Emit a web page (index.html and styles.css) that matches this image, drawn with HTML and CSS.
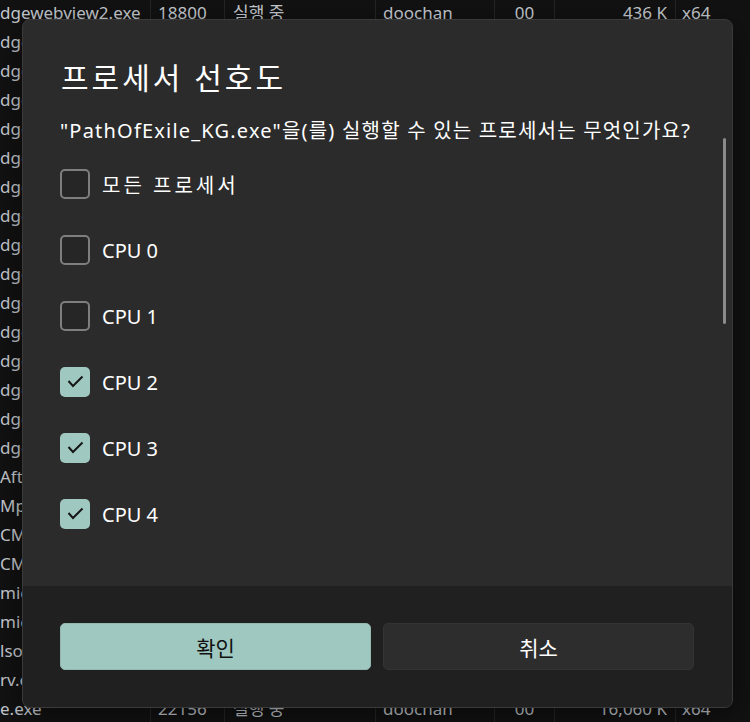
FILE: index.html
```html
<!DOCTYPE html>
<html lang="ko">
  <head>
    <meta charset="UTF-8" />
    <title>프로세서 선호도</title>
    <link rel="stylesheet" href="styles.css">
  </head>
  <body>
    <div id="table">
      <div class="row"><span class="name">dgewebview2.exe</span><span class="pid">18800</span><span class="status">실행 중</span><span class="user">doochan</span><span class="cpu">00</span><span class="mem">436 K</span><span class="arch">x64</span></div>
      <div class="row"><span class="name">dgewebview2.exe</span></div>
      <div class="row"><span class="name">dgewebview2.exe</span></div>
      <div class="row"><span class="name">dgewebview2.exe</span></div>
      <div class="row"><span class="name">dgewebview2.exe</span></div>
      <div class="row"><span class="name">dgewebview2.exe</span></div>
      <div class="row"><span class="name">dgewebview2.exe</span></div>
      <div class="row"><span class="name">dgewebview2.exe</span></div>
      <div class="row"><span class="name">dgewebview2.exe</span></div>
      <div class="row"><span class="name">dgewebview2.exe</span></div>
      <div class="row"><span class="name">dgewebview2.exe</span></div>
      <div class="row"><span class="name">dgewebview2.exe</span></div>
      <div class="row"><span class="name">dgewebview2.exe</span></div>
      <div class="row"><span class="name">dgewebview2.exe</span></div>
      <div class="row"><span class="name">dgewebview2.exe</span></div>
      <div class="row"><span class="name">dgewebview2.exe</span></div>
      <div class="row"><span class="name">AfterFX.exe</span></div>
      <div class="row"><span class="name">MpDefender.exe</span></div>
      <div class="row"><span class="name">CMService.exe</span></div>
      <div class="row"><span class="name">CMService.exe</span></div>
      <div class="row"><span class="name">microsoft.exe</span></div>
      <div class="row"><span class="name">microsoft.exe</span></div>
      <div class="row"><span class="name">lsoHost.exe</span></div>
      <div class="row"><span class="name">rv.exe</span></div>
      <div class="row"><span class="name">e.exe</span><span class="pid">22156</span><span class="status">실행 중</span><span class="user">doochan</span><span class="cpu">00</span><span class="mem">16,060 K</span><span class="arch">x64</span></div>
    </div>

    <div id="dialog">
      <div class="content">
        <h1 class="title">프로세서 선호도</h1>
        <p class="question">"PathOfExile_KG.exe"을(를) 실행할 수 있는 프로세서는 무엇인가요?</p>
        <ul class="options">
          <li><span class="box"></span><span class="ko">모든 프로세서</span></li>
          <li><span class="box"></span>CPU 0</li>
          <li><span class="box"></span>CPU 1</li>
          <li><span class="box checked"><svg viewBox="0 0 30 30"><path d="M8.5 14l4.5 5 9.5-9.5"/></svg></span>CPU 2</li>
          <li><span class="box checked"><svg viewBox="0 0 30 30"><path d="M8.5 14l4.5 5 9.5-9.5"/></svg></span>CPU 3</li>
          <li><span class="box checked"><svg viewBox="0 0 30 30"><path d="M8.5 14l4.5 5 9.5-9.5"/></svg></span>CPU 4</li>
        </ul>
        <div class="scrollbar"></div>
      </div>
      <div class="footer">
        <button class="primary">확인</button>
        <button>취소</button>
      </div>
    </div>
  </body>
</html>
```

FILE: styles.css
```css
* {
  box-sizing: border-box;
  margin: 0;
  padding: 0;
}
body {
  width: 750px;
  height: 722px;
  overflow: hidden;
  background-color: #121212;
  font-family: "Noto Sans", "Noto Sans CJK KR", sans-serif;
  position: relative;
}

/* task list behind the dialog */
#table {
  margin-top: -2px;
  color: #c9cdd3;
  font-size: 17px;
}
.row {
  display: flex;
  height: 29px;
  line-height: 29px;
  white-space: nowrap;
}
.row span {
  overflow: hidden;
  flex-shrink: 0;
}
.name {
  width: 150px;
}
.pid {
  width: 74px;
  padding-left: 7px;
  border-left: 1px solid #262626;
}
.status {
  width: 151px;
  padding-left: 8px;
  border-left: 1px solid #262626;
}
.user {
  width: 119px;
  padding-left: 7px;
  border-left: 1px solid #262626;
}
.cpu {
  width: 60px;
  text-align: center;
  border-left: 1px solid #262626;
}
.mem {
  width: 121px;
  text-align: right;
  padding-right: 8px;
  border-left: 1px solid #262626;
}
.arch {
  width: 75px;
  padding-left: 6px;
  border-left: 1px solid #262626;
}

/* dialog */
#dialog {
  position: absolute;
  left: 22px;
  top: 19px;
  width: 711px;
  height: 689px;
  display: flex;
  flex-direction: column;
  background-color: #2b2b2b;
  border: 1px solid #3a3a3a;
  border-radius: 8px;
  overflow: hidden;
  box-shadow: 0 8px 32px rgba(0, 0, 0, 0.5);
  color: #ffffff;
}
.content {
  flex: 1;
  position: relative;
  padding: 38px 37px 0;
}
.title {
  font-size: 30px;
  font-weight: 400;
  line-height: 40px;
  letter-spacing: 3px;
  margin-left: 1px;
}
.question {
  font-size: 20px;
  line-height: 28px;
  letter-spacing: 1.2px;
  margin-top: 19px;
}
.options {
  list-style: none;
  margin-top: 6px;
}
.options li {
  display: flex;
  align-items: center;
  height: 66px;
  font-size: 20px;
}
.ko {
  letter-spacing: 3px;
}
.box {
  width: 30px;
  height: 30px;
  margin-right: 12px;
  border: 2px solid #7e7e7e;
  border-radius: 5px;
  background-color: #262626;
}
.box.checked {
  border: none;
  background-color: #9fc9c0;
}
.box svg {
  display: block;
  width: 30px;
  height: 30px;
  fill: none;
  stroke: #161616;
  stroke-width: 2;
}
.scrollbar {
  position: absolute;
  left: 700px;
  top: 118px;
  width: 3px;
  height: 186px;
  border-radius: 2px;
  background-color: #8a8a8a;
}
.footer {
  display: grid;
  grid-template-columns: 1fr 1fr;
  gap: 12px;
  height: 121px;
  padding: 37px 38px 0 37px;
  background-color: #202020;
}
.footer button {
  height: 47px;
  border: 1px solid #343434;
  border-radius: 5px;
  background-color: #2d2d2d;
  color: #ffffff;
  font-family: inherit;
  font-size: 21px;
}
.footer button.primary {
  border-color: #94b8b0;
  background-color: #9fc9c0;
  color: #111111;
}
```
